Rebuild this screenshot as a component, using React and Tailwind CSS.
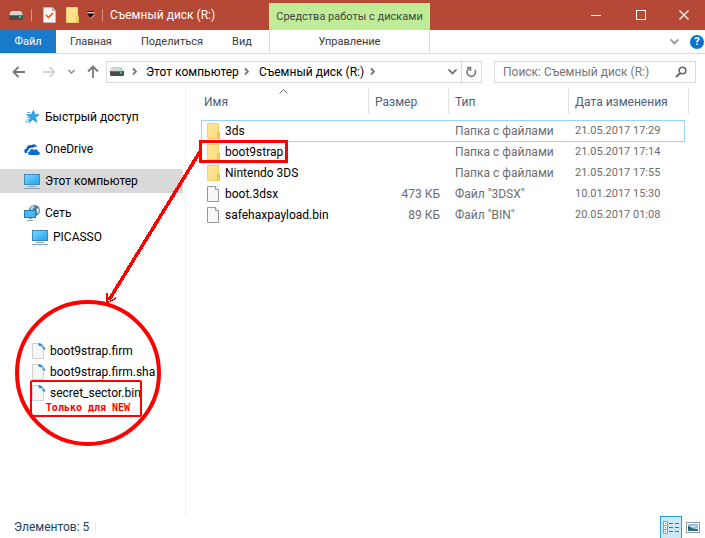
import React from "react";

const files = [
  { name: "3ds", size: "", type: "Папка с файлами", date: "21.05.2017 17:29", folder: true },
  { name: "boot9strap", size: "", type: "Папка с файлами", date: "21.05.2017 17:14", folder: true },
  { name: "Nintendo 3DS", size: "", type: "Папка с файлами", date: "21.05.2017 17:55", folder: true },
  { name: "boot.3dsx", size: "473 КБ", type: 'Файл "3DSX"', date: "10.01.2017 15:30" },
  { name: "safehaxpayload.bin", size: "89 КБ", type: 'Файл "BIN"', date: "20.05.2017 01:08" },
];

function DriveIcon() {
  return (
    <svg width="14" height="9" viewBox="0 0 14 9" className="shrink-0">
      <path d="M2 0h10l2 4H0z" fill="#d3d3d3" />
      <path d="M0 4h14v4l-1 1H1L0 8z" fill="#4a4a4a" />
      <path d="M1 4h12v1H1z" fill="#707070" />
      <rect x="10" y="5" width="2" height="2" fill="#22e04a" />
    </svg>
  );
}

function FolderIcon() {
  return (
    <svg width="13" height="16" viewBox="0 0 13 16" className="shrink-0">
      <defs>
        <linearGradient id="folder" x1="0" y1="0" x2="1" y2="1">
          <stop offset="0" stopColor="#ffe79b" />
          <stop offset="1" stopColor="#fcdc7c" />
        </linearGradient>
      </defs>
      <path d="M0.500 0.500h11v8.500h1v6.500h-12z" fill="url(#folder)" stroke="#f0d070" />
      <path d="M10.500 15.500v-6h2v6z" fill="#fbd768" stroke="#e5bf4c" />
    </svg>
  );
}

function PageIcon() {
  return (
    <svg width="13" height="16" viewBox="0 0 13 16" className="shrink-0">
      <path d="M0.500.5h8l3 3v12h-11z" fill="#f8f8f8" stroke="#959595" />
      <path d="M8.500.5v3h3" fill="#fff" stroke="#959595" />
    </svg>
  );
}

function ToolPageIcon() {
  return (
    <svg width="14" height="16" viewBox="0 0 14 16" className="shrink-0">
      <path d="M0.500.5h7.500l3.500 4v11h-11z" fill="#f6f6f6" stroke="#d0d0d0" />
      <path d="M6 1.500L7.500 0l3 1.500L12 4l1.500 1.500-1 1.500-1.500-1-1-2.500L7.500 3z" fill="#2f86cc" />
      <path d="M9.500 1.500l1.500 2.500M11.500 4.500l-1 1" stroke="#a9d3f2" strokeWidth="0.8" />
    </svg>
  );
}

function MonitorIcon() {
  return (
    <svg width="16" height="15" viewBox="0 0 16 15" className="shrink-0">
      <defs>
        <linearGradient id="screen" x1="0" y1="0" x2="1" y2="1">
          <stop offset="0" stopColor="#7fd4ff" />
          <stop offset="1" stopColor="#1ca3f5" />
        </linearGradient>
      </defs>
      <rect x="0.500" y="0.500" width="15" height="10" fill="url(#screen)" stroke="#3c86b8" />
      <path d="M4 12.500h8M0 14.500h16" stroke="#8aa2b8" />
    </svg>
  );
}

function StarIcon() {
  return (
    <svg width="16" height="14" viewBox="0 0 16 14" className="shrink-0">
      <path d="M9.500 0.500l1.300 4 4.200.2-3.600 2.700 1.500 4.800-4-2.700-4.100 3 1.400-4.900L3 4.800l4.500-.2z" fill="#31a7ee" stroke="#1786cf" strokeWidth="0.7" />
      <path d="M3 2.500h3.500M2 4.500h2M3 7.500h2M2 10h3M1 12h3" stroke="#62b8e8" />
    </svg>
  );
}

function CloudIcon() {
  return (
    <svg width="16" height="11" viewBox="0 0 16 11" className="shrink-0">
      <path d="M1.500 9C-.3 8-.2 5.200 2.400 4.700 2.500 1.800 5.400.2 7.700 1.200 9.300-.5 12.500.3 13 3 11 2.200 9.500 3 8.800 4 6.500 3 4.300 4.500 4.400 6.600 3.200 7 2.800 8.300 3.300 9z" fill="#0a64c0" />
      <path d="M6 11C3.500 10.700 3.600 7.700 5.800 7.500 5.700 5 8.700 4.200 9.900 5.900 11.500 4.600 14 5.500 13.900 7.500 16.500 7.700 16.500 10.800 14 11z" fill="#0a6ed1" />
    </svg>
  );
}

function NetworkIcon() {
  return (
    <svg width="16" height="16" viewBox="0 0 16 16" className="shrink-0">
      <circle cx="10.500" cy="5.500" r="5.500" fill="#457f9f" />
      <path d="M6.500 3c2-3 4-2 4-1s-2 1-2 3-2 1-2-2zM12 4l3-1c1 2 0 5-2 6z" fill="#b9d9e5" />
      <rect x="0.500" y="5.500" width="11" height="7" fill="#48b8fa" stroke="#2878ae" />
      <path d="M5 13.500h3M3 15.500h6" stroke="#8aa2b8" />
    </svg>
  );
}

function Chevron({ down = false, className = "" }) {
  return (
    <svg width="9" height="9" viewBox="0 0 9 9" className={"shrink-0 " + className} fill="none" stroke="currentColor" strokeWidth="1.800">
      <path d={down ? "M0.500 2.500l4 4 4-4" : "M3 1.500l3 3-3 3"} />
    </svg>
  );
}

function Arrow({ rotate = "", className = "" }) {
  return (
    <svg width="14" height="14" viewBox="0 0 14 14" className={"shrink-0 " + rotate + " " + className} fill="none" stroke="currentColor" strokeWidth="1.800">
      <path d="M13 7H2M6.500 2L1.500 7l5 5" />
    </svg>
  );
}

function TitleBar() {
  return (
    <header className="flex h-[30px] items-center bg-[#b54935] text-white">
      <div className="flex w-[269px] items-center pl-[9px]">
        <DriveIcon />
        <span className="ml-2 h-3 w-px bg-[#d79286]" />
        <button aria-label="Свойства" className="ml-[11px]">
          <svg width="13" height="16" viewBox="0 0 13 16">
            <path d="M0.500.5h9l3 3v12h-12z" fill="#f7f7f7" stroke="#bbb" />
            <path d="M9.500.5v3h3" fill="#ddd" stroke="#999" />
            <path d="M3 8l2.500 2.500L10 6" fill="none" stroke="#e85a24" strokeWidth="1.600" />
          </svg>
        </button>
        <button aria-label="Новая папка" className="ml-[10px]"><FolderIcon /></button>
        <button aria-label="Настройка панели" className="ml-2">
          <svg width="8" height="8" viewBox="0 0 8 8">
            <path d="M0.500 0.500h6" stroke="#111" />
            <path d="M0.500 1.500h7" stroke="#e7c6bf" />
            <path d="M0 3h7L3.500 6.500z" fill="#111" />
            <path d="M4 7.500l4-4" stroke="#e7c6bf" />
          </svg>
        </button>
        <span className="ml-[7px] h-3 w-px bg-[#d79286]" />
        <h1 className="ml-[7px] whitespace-nowrap">Съемный диск (R:)</h1>
      </div>
      <div className="flex h-[27px] w-[161px] items-center justify-center self-end whitespace-nowrap bg-[#c0ec98] text-[11px] text-[#444]">
        Средства работы с дисками
      </div>
      <div className="ml-auto flex">
        <button aria-label="Свернуть" className="flex h-7 w-[45px] items-center justify-center">
          <svg width="10" height="10"><path d="M0 5.500h10" stroke="#fff" /></svg>
        </button>
        <button aria-label="Развернуть" className="flex h-7 w-[45px] items-center justify-center">
          <svg width="10" height="10"><rect x="0.500" y="0.500" width="9" height="9" fill="none" stroke="#fff" /></svg>
        </button>
        <button aria-label="Закрыть" className="flex h-7 w-[42px] items-center justify-center">
          <svg width="10" height="10"><path d="M0.500.5l9 9M9.500.5l-9 9" stroke="#fff" strokeWidth="1.200" /></svg>
        </button>
      </div>
    </header>
  );
}

function RibbonTabs() {
  return (
    <nav className="flex h-6 border-b border-[#d9dadb] text-[11px] text-[#3a3a3a]">
      <button className="w-14 bg-[#1979ca] text-white">Файл</button>
      <button className="w-[70px]">Главная</button>
      <button className="w-[92px]">Поделиться</button>
      <button className="w-[48px]">Вид</button>
      <button className="ml-[3px] w-[161px] border-x border-[#dcdcdc]">Управление</button>
      <div className="ml-auto flex items-center pr-px">
        <button aria-label="Свернуть ленту" className="mr-[11px] text-[#9a9a9a]"><Chevron down /></button>
        <button aria-label="Справка" className="flex size-[14px] items-center justify-center rounded-full bg-[#0874d1] font-bold text-white">?</button>
      </div>
    </nav>
  );
}

function AddressRow() {
  return (
    <div className="flex h-[35px] items-center pl-3 pr-[9px]">
      <button aria-label="Назад" className="text-[#777]"><Arrow /></button>
      <button aria-label="Вперед" className="ml-4 text-[#d5d5d5]"><Arrow rotate="rotate-180" /></button>
      <button aria-label="Последние" className="ml-3 text-[#888]"><Chevron down className="w-[7px]" /></button>
      <button aria-label="Вверх" className="ml-[11px] mr-[6px] text-[#777]"><Arrow rotate="rotate-90" /></button>
      <div className="flex h-[22px] min-w-0 flex-1 items-center border border-[#d9d9d9] pl-[3px] text-black">
        <DriveIcon />
        <Chevron className="ml-[6px] text-[#777]" />
        <button className="w-[103px] whitespace-nowrap pl-[7px] text-left">Этот компьютер</button>
        <Chevron className="text-[#777]" />
        <button className="w-[117px] whitespace-nowrap pl-2 text-left">Съемный диск (R:)</button>
        <Chevron className="text-[#777]" />
        <button aria-label="Журнал" className="ml-auto mr-1 text-[#777]"><Chevron down /></button>
        <button aria-label="Обновить" className="flex h-full w-5 items-center justify-center border-l border-[#d9d9d9]">
          <svg width="11" height="12" viewBox="0 0 11 12" fill="none" stroke="#777" strokeWidth="1.600">
            <path d="M3.500 2.300A4.200 4.200 0 1 0 9 4.200" />
            <path d="M1 1.500h3.500v3.500" />
          </svg>
        </button>
      </div>
      <label className="ml-3 flex h-[22px] w-[202px] items-center border border-[#d9d9d9] px-2">
        <input aria-label="Поиск" placeholder="Поиск: Съемный диск (R:)" className="min-w-0 flex-1 outline-none placeholder:text-[#767676]" />
        <svg width="12" height="12" viewBox="0 0 12 12" fill="none" stroke="#666" strokeWidth="1.600">
          <circle cx="7.500" cy="4.500" r="3.300" />
          <path d="M5.200 7L1 11" strokeWidth="2" />
        </svg>
      </label>
    </div>
  );
}

function SideItem({ icon, children, selected = false, nested = false }) {
  return (
    <li>
      <a href="#" className={"flex h-6 items-center text-black " + (nested ? "pl-8 " : "pl-6 ") + (selected ? "bg-[#d9d9d9]" : "")}>
        {icon}
        <span className="ml-[5px]">{children}</span>
      </a>
    </li>
  );
}

function Sidebar() {
  return (
    <aside className="w-[186px] shrink-0 border-r border-[#f0f0f0] pr-[2px] pt-4">
      <ul className="flex flex-col gap-2">
        <SideItem icon={<StarIcon />}>Быстрый доступ</SideItem>
        <SideItem icon={<CloudIcon />}>OneDrive</SideItem>
        <SideItem icon={<MonitorIcon />} selected>Этот компьютер</SideItem>
        <li>
          <ul>
            <SideItem icon={<NetworkIcon />}>Сеть</SideItem>
            <SideItem icon={<MonitorIcon />} nested>PICASSO</SideItem>
          </ul>
        </li>
      </ul>
    </aside>
  );
}

function HeadCell({ children, span = 1, first = false }) {
  return (
    <th colSpan={span} className="h-[31px] p-0 align-top font-normal">
      <div className={"relative flex h-[25px] items-center border-r border-[#e2e2e2] text-left " + (first ? "pl-[3px]" : "pl-[6px]")}>
        {children}
        {first && (
          <svg width="9" height="5" viewBox="0 0 9 5" className="absolute left-[78px] top-0" fill="none" stroke="#777"><path d="M0.500 4.500l4-4 4 4" /></svg>
        )}
      </div>
    </th>
  );
}

function FileTable() {
  return (
    <table className="ml-[15px] w-[488px] table-fixed border-separate border-spacing-0 self-start whitespace-nowrap">
      <colgroup>
        <col className="w-[168px]" />
        <col className="w-20" />
        <col className="w-[120px]" />
        <col className="w-[116px]" />
        <col className="w-1" />
      </colgroup>
      <thead className="text-[#4c607a]">
        <tr>
          <HeadCell first>Имя</HeadCell>
          <HeadCell>Размер</HeadCell>
          <HeadCell>Тип</HeadCell>
          <HeadCell span={2}>Дата изменения</HeadCell>
        </tr>
      </thead>
      <tbody className="text-[#6d6d6d]">
        {files.map((f, i) => {
          const line = i === 0 ? "h-[22px] border-y border-[#99d1ff] py-0 " : "h-[21px] pt-0 pb-px ";
          return (
            <tr key={f.name}>
              <td className={line + "pr-0 text-black " + (i === 0 ? "border-l pl-[5px]" : "pl-[6px]")}>
                <div className="flex items-center gap-[5px]">
                  {f.folder ? <FolderIcon /> : <PageIcon />}
                  {f.name}
                </div>
              </td>
              <td className={line + "pl-0 pr-[9px] text-right"}>{f.size}</td>
              <td className={line + "pl-[6px] pr-0"}>{f.type}</td>
              <td className={line + "pl-[6px] pr-0 text-[11px] " + (i === 0 ? "border-r" : "")}>{f.date}</td>
            </tr>
          );
        })}
      </tbody>
    </table>
  );
}

function Callout() {
  return (
    <>
      <svg width="300" height="320" viewBox="0 0 300 320" className="pointer-events-none absolute left-0 top-[130px]" fill="none" stroke="#f00" shapeRendering="crispEdges">
        <rect x="200.500" y="11.500" width="86" height="20" strokeWidth="3" />
        <path d="M201 20L109 170" strokeWidth="3.500" />
        <path d="M107 173v-10M107 173l9-5" strokeWidth="1.500" />
      </svg>
      <div className="absolute left-[15px] top-[300px] size-[146px] rounded-full border-4 border-[#f00]" />
      <div className="absolute left-[32px] top-[340px] whitespace-nowrap text-black">
        <ul>
          {["boot9strap.firm", "boot9strap.firm.sha", "secret_sector.bin"].map((name) => (
            <li key={name} className="flex h-[21px] items-center gap-1"><ToolPageIcon />{name}</li>
          ))}
        </ul>
      </div>
      <div className="absolute left-[30px] top-[380px] flex h-[37px] w-[112px] items-end justify-center rounded-[2px] border-2 border-[#f00] pl-1 font-['DejaVu_Sans_Mono',monospace] text-[10px] font-bold leading-[14px] text-[#f00]">
        Только для NEW
      </div>
    </>
  );
}

function StatusBar() {
  return (
    <footer className="flex h-[22px] items-center pl-[14px] pr-[5px] text-[#24405f]">
      <span>Элементов: 5</span>
      <span className="ml-[6px] h-[11px] w-px bg-[#eee]" />
      <button aria-label="Таблица" className="ml-auto flex h-[22px] w-[22px] items-center justify-center border border-b-0 border-[#26a0da] bg-[#cce8f7]">
        <svg width="16" height="14" viewBox="0 0 16 14">
          <path d="M0.500.5h4v12h-4zM0.500 4.500h4M0.500 8.500h4" fill="#fff" stroke="#999" />
          <path d="M6 2.500h4M12 2.500h4M6 6.500h4M12 6.500h4M6 10.500h4M12 10.500h4" stroke="#5d6b75" />
          <path d="M2 2h1v1H2z" fill="#777" /><path d="M2 6h1v1H2z" fill="#1b8ee0" /><path d="M2 10h1v1H2z" fill="#d33" />
        </svg>
      </button>
      <button aria-label="Эскизы" className="ml-1">
        <svg width="14" height="11" viewBox="0 0 14 11">
          <rect x="0.500" y="0.500" width="13" height="10" fill="#fff" stroke="#999" />
          <rect x="2" y="2" width="10" height="4" fill="#8fc1f5" />
          <path d="M2 5l4 1 6 1v2H2z" fill="#2f6f84" /><path d="M2 4l4 2-4 1z" fill="#2c5a50" /><path d="M5 4h4v1H5z" fill="#e5f2ff" />
        </svg>
      </button>
    </footer>
  );
}

export default function App() {
  return (
    <div className="relative flex min-h-screen flex-col overflow-hidden bg-white font-['Roboto','Noto_Sans',sans-serif] text-[12px] leading-[16px]">
      <TitleBar />
      <RibbonTabs />
      <AddressRow />
      <main className="flex flex-1">
        <Sidebar />
        <FileTable />
      </main>
      <StatusBar />
      <Callout />
    </div>
  );
}
